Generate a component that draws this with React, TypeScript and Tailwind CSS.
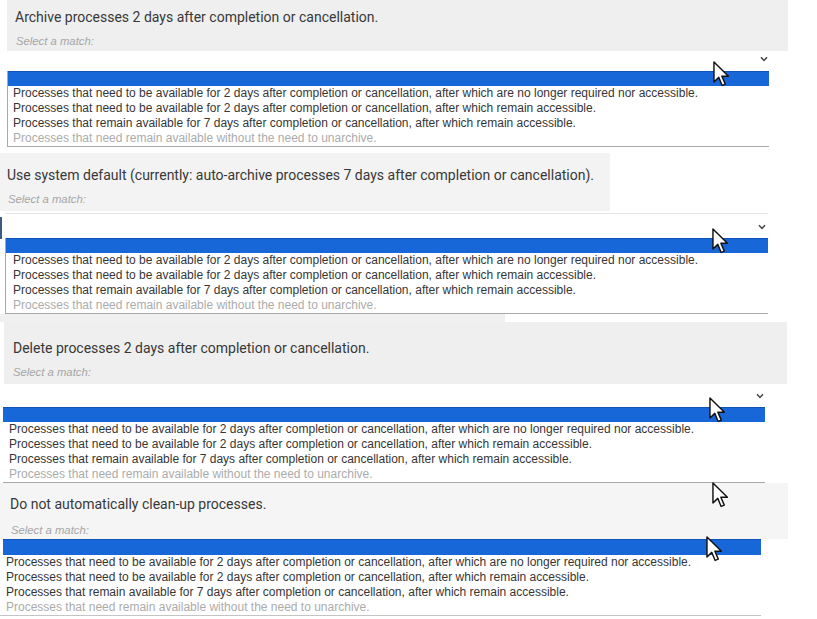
import React from "react";

const OPTIONS = [
  "Processes that need to be available for 2 days after completion or cancellation, after which are no longer required nor accessible.",
  "Processes that need to be available for 2 days after completion or cancellation, after which remain accessible.",
  "Processes that remain available for 7 days after completion or cancellation, after which remain accessible.",
  "Processes that need remain available without the need to unarchive.",
];

const titleFont = { fontFamily: "Roboto, 'Liberation Sans', sans-serif" };
const optFont = { fontFamily: "'Liberation Sans', Arial, sans-serif" };

function Chevron() {
  return (
    <svg width="8" height="6" viewBox="0 0 8 6" className="block">
      <path d="M1 1.2 L4 4.4 L7 1.2" fill="none" stroke="#444" strokeWidth="1.5" />
    </svg>
  );
}

function Cursor() {
  return (
    <svg width="17" height="26" viewBox="0 0 13 20">
      <path
        d="M0.7 0.7 L0.7 16.2 L4.4 12.6 L7 18.8 L9.4 17.8 L6.8 11.7 L11.8 11.7 Z"
        fill="#fff"
        stroke="#111"
        strokeWidth="1.1"
        strokeLinejoin="round"
      />
    </svg>
  );
}

function Options({ pad }: { pad: string }) {
  return (
    <div className={`text-[12px] leading-[15px] ${pad}`} style={optFont}>
      {OPTIONS.map((o, i) => (
        <div
          key={i}
          className={`h-[15px] whitespace-nowrap ${i === 3 ? "text-[#ababab]" : "text-[#363636]"}`}
        >
          {o}
        </div>
      ))}
    </div>
  );
}

function Title({ children, className }: { children: React.ReactNode; className: string }) {
  return (
    <div className={`h-[20px] text-[14px] leading-[20px] text-[#383838] whitespace-nowrap ${className}`} style={titleFont}>
      {children}
    </div>
  );
}

function Hint({ className }: { className: string }) {
  return (
    <div className={`h-[14px] text-[11.3px] leading-[14px] italic text-[#a6a6a6] ${className}`} style={optFont}>
      Select a match:
    </div>
  );
}

export default function App() {
  return (
    <div className="relative h-[619px] w-[817px] overflow-hidden bg-white">
      {/* block 1 */}
      <div className="ml-[7px] h-[51px] w-[781px] bg-[#efefef] pl-[8px] pt-[7px]">
        <Title className="">Archive processes 2 days after completion or cancellation.</Title>
        <Hint className="mt-[7px] pl-[1px]" />
      </div>
      <div className="ml-[7px] w-[762px]">
        <div className="flex h-[20px] items-start justify-end pr-[1px] pt-[5px]">
          <Chevron />
        </div>
        <div className="border-b border-l border-[#a9a9a9]">
          <div className="h-[15px] border-t border-[#0f52b8] bg-[#1867d8]" />
          <Options pad="pl-[5px]" />
        </div>
      </div>

      {/* block 2 */}
      <div className="mt-[6px] h-[58px] w-[610px] bg-[#f3f3f3] pl-[7px] pt-[12px]">
        <Title className="">
          Use system default (currently: auto-archive processes 7 days after completion or cancellation).
        </Title>
        <Hint className="mt-[7px] pl-[1px]" />
      </div>
      <div className="relative ml-[5px] mt-[2px] w-[763px]">
        <div className="absolute left-[-5px] top-[4px] h-[22px] w-[2px] bg-[#3d5a80]" />
        <div className="flex h-[25px] items-start justify-end border-t border-[#e4e4e4] pr-[2px] pt-[10px]">
          <Chevron />
        </div>
        <div className="border-b border-l border-[#a9a9a9]">
          <div className="h-[15px] border-t border-[#0f52b8] bg-[#1867d8]" />
          <Options pad="pl-[7px]" />
        </div>
      </div>
      <div className="h-[8px] w-[505px] bg-[#f0f0f0]" />

      {/* block 3 */}
      <div className="ml-[4px] h-[62px] w-[783px] bg-[#efefef] pl-[9px] pt-[16px]">
        <Title className="">Delete processes 2 days after completion or cancellation.</Title>
        <Hint className="mt-[7px]" />
      </div>
      <div className="ml-[3px] w-[762px]">
        <div className="flex h-[23px] items-start justify-end pr-[1px] pt-[9px]">
          <Chevron />
        </div>
        <div className="border-b border-[#a9a9a9]">
          <div className="h-[15px] border-t border-[#0f52b8] bg-[#1867d8]" />
          <Options pad="pl-[6px]" />
        </div>
      </div>

      {/* block 4 */}
      <div className="h-[56px] w-[788px] bg-[#f5f5f5] pl-[10px] pt-[11px]">
        <Title className="">Do not automatically clean-up processes.</Title>
        <Hint className="mt-[9px] pl-[1px]" />
      </div>
      <div className="w-[761px]">
        <div className="ml-[3px] h-[16px] border-t border-[#0f52b8] bg-[#1867d8]" />
        <div className="border-b border-[#c4c4c4]">
          <Options pad="pl-[6px]" />
        </div>
      </div>

      {/* mouse pointers from the recording */}
      <div className="absolute left-[713px] top-[61px]"><Cursor /></div>
      <div className="absolute left-[712px] top-[228px]"><Cursor /></div>
      <div className="absolute left-[709px] top-[397px]"><Cursor /></div>
      <div className="absolute left-[712px] top-[482px]"><Cursor /></div>
      <div className="absolute left-[706px] top-[536px]"><Cursor /></div>
    </div>
  );
}
